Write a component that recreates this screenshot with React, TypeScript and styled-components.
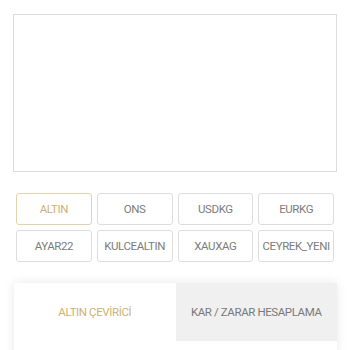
import React, { useState } from 'react';
import styled, { createGlobalStyle } from 'styled-components';

const GlobalStyle = createGlobalStyle`
  body {
    margin: 0;
    background: #ffffff;
    font-family: Roboto, "Liberation Sans", Arial, sans-serif;
  }
`;

const Page = styled.div`
  width: 350px;
  height: 350px;
  overflow: hidden;
  padding: 14px 13px 0 13px;
  box-sizing: border-box;
`;

const ChartBox = styled.div`
  height: 158px;
  border: 1px solid #dcdcdc;
  box-sizing: border-box;
  background: #fff;
`;

const SymbolGrid = styled.div`
  display: grid;
  grid-template-columns: repeat(4, 1fr);
  grid-auto-rows: 32px;
  column-gap: 5px;
  row-gap: 5px;
  margin: 21px 3px 0 3px;
`;

interface SymbolButtonProps {
  $active: boolean;
}

const SymbolButton = styled.button<SymbolButtonProps>`
  display: flex;
  align-items: center;
  justify-content: center;
  padding: 0;
  background: #fff;
  border: 1px solid ${p => (p.$active ? '#e2d3ae' : '#dddddd')};
  border-radius: 3px;
  font-family: Roboto, "Liberation Sans", Arial, sans-serif;
  font-size: 11.5px;
  font-weight: 400;
  letter-spacing: -0.4px;
  color: ${p => (p.$active ? '#cdb173' : '#7c7c7c')};
  white-space: nowrap;
  overflow: hidden;
  cursor: pointer;
`;

const Card = styled.div`
  margin: 21px 0 0 1px;
  background: #fff;
  box-shadow: 0 0 10px rgba(0, 0, 0, 0.09);
  height: 80px;
`;

const TabRow = styled.div`
  display: flex;
  height: 58px;
`;

interface TabProps {
  $active: boolean;
}

const Tab = styled.div<TabProps>`
  flex: 1;
  display: flex;
  align-items: center;
  justify-content: center;
  background: ${p => (p.$active ? '#ffffff' : '#f0f0f0')};
  color: ${p => (p.$active ? '#cdb173' : '#797979')};
  font-size: 11.5px;
  letter-spacing: -0.4px;
  cursor: pointer;
`;

const symbols = ['ALTIN', 'ONS', 'USDKG', 'EURKG', 'AYAR22', 'KULCEALTIN', 'XAUXAG', 'CEYREK_YENI'];
const tabs = ['ALTIN ÇEVİRİCİ', 'KAR / ZARAR HESAPLAMA'];

const App: React.FC = () => {
  const [symbol, setSymbol] = useState('ALTIN');
  const [tab, setTab] = useState(0);

  return (
    <>
      <GlobalStyle />
      <Page>
        <ChartBox />
        <SymbolGrid>
          {symbols.map(s => (
            <SymbolButton key={s} $active={s === symbol} onClick={() => setSymbol(s)}>
              {s}
            </SymbolButton>
          ))}
        </SymbolGrid>
        <Card>
          <TabRow>
            {tabs.map((t, i) => (
              <Tab key={t} $active={i === tab} onClick={() => setTab(i)}>
                {t}
              </Tab>
            ))}
          </TabRow>
        </Card>
      </Page>
    </>
  );
}

export default App;
